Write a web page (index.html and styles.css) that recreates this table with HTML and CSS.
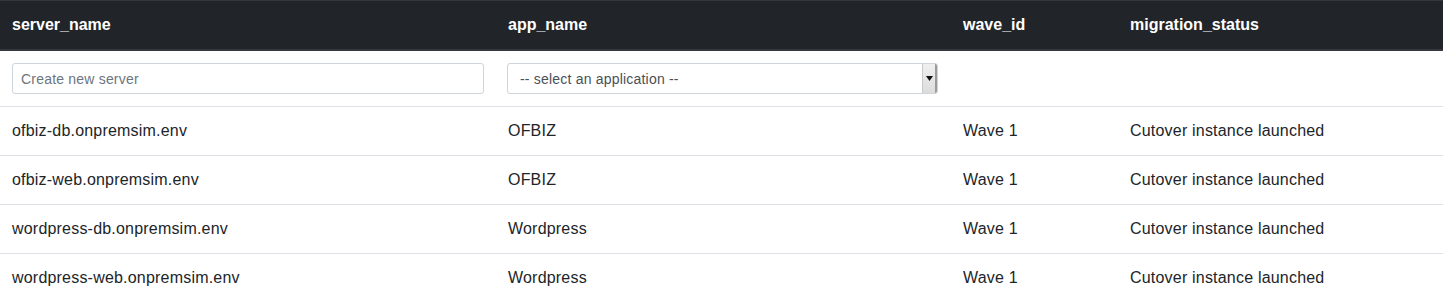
FILE: index.html
```html
<!DOCTYPE html>
<html>
<head>
<meta charset="utf-8">
<link rel="stylesheet" href="styles.css">
</head>
<body>
<table class="table">
  <thead class="thead-dark">
    <tr>
      <th class="col-server">server_name</th>
      <th class="col-app">app_name</th>
      <th class="col-wave">wave_id</th>
      <th class="col-status">migration_status</th>
    </tr>
  </thead>
  <tbody>
    <tr class="filter-row">
      <td><input class="form-control" type="text" placeholder="Create new server"></td>
      <td>
        <div class="select-wrap">
          <select class="form-select">
            <option>-- select an application --</option>
          </select>
          <span class="select-btn"><svg width="7" height="5" viewBox="0 0 7 5"><path d="M0 0H7L3.5 5Z" fill="#111"/></svg></span>
        </div>
      </td>
      <td></td>
      <td></td>
    </tr>
    <tr><td>ofbiz-db.onpremsim.env</td><td>OFBIZ</td><td>Wave 1</td><td>Cutover instance launched</td></tr>
    <tr><td>ofbiz-web.onpremsim.env</td><td>OFBIZ</td><td>Wave 1</td><td>Cutover instance launched</td></tr>
    <tr><td>wordpress-db.onpremsim.env</td><td>Wordpress</td><td>Wave 1</td><td>Cutover instance launched</td></tr>
    <tr><td>wordpress-web.onpremsim.env</td><td>Wordpress</td><td>Wave 1</td><td>Cutover instance launched</td></tr>
  </tbody>
</table>
</body>
</html>
```
FILE: styles.css
```css
html, body {
  margin: 0;
  padding: 0;
  background: #fff;
}
body {
  font-family: "Liberation Sans", Arial, sans-serif;
  font-size: 16px;
  line-height: 24px;
  color: #212529;
}
.table {
  width: 100%;
  border-collapse: collapse;
}
.table th,
.table td {
  padding: 12px;
  text-align: left;
  vertical-align: top;
  border-top: 1px solid #dee2e6;
}
.table td {
  letter-spacing: 0.2px;
}
.thead-dark th {
  background: #212529;
  color: #fff;
  font-weight: bold;
  border-top: 1px solid #32383e;
  border-bottom: 2px solid #32383e;
}
.col-server { width: 472px; }
.col-app { width: 431px; }
.col-wave { width: 143px; }
.filter-row td {
  border-top: none;
}
.form-control {
  display: block;
  box-sizing: border-box;
  width: 100%;
  height: 31px;
  padding: 4px 8px;
  font-family: inherit;
  font-size: 14px;
  line-height: 21px;
  letter-spacing: 0.2px;
  color: #495057;
  background: #fff;
  border: 1px solid #ced4da;
  border-radius: 3px;
  outline: none;
}
.form-control::placeholder {
  color: #6c757d;
  opacity: 1;
}
.select-wrap {
  position: relative;
  width: 431px;
  margin-left: -1px;
}
.form-select {
  display: block;
  box-sizing: border-box;
  width: 100%;
  height: 31px;
  padding: 4px 8px 4px 12px;
  font-family: inherit;
  font-size: 14px;
  letter-spacing: 0.2px;
  color: #495057;
  background: #fff;
  border: 1px solid #ced4da;
  border-radius: 3px;
  -webkit-appearance: none;
  appearance: none;
  outline: none;
}
.select-btn {
  position: absolute;
  top: 1px;
  right: 1px;
  width: 15px;
  height: 29px;
  display: flex;
  align-items: center;
  justify-content: center;
  background: linear-gradient(#f0f0f0, #dcdcdc);
  border-left: 1px solid #c8c8c8;
  border-right: 2px solid #9a9a9a;
  box-sizing: border-box;
  border-radius: 0 2px 2px 0;
}
```
